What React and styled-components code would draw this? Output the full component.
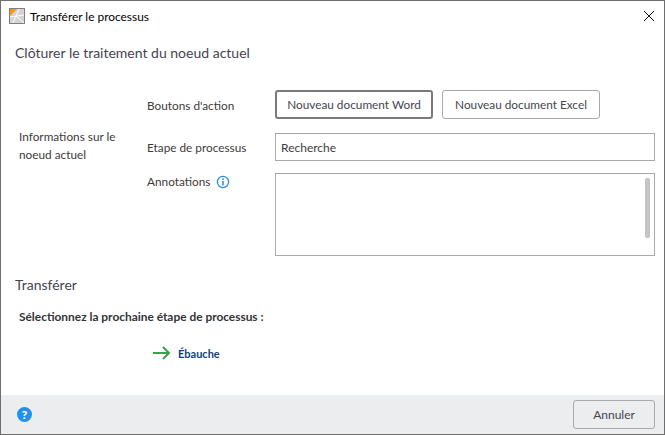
import styled, { createGlobalStyle } from "styled-components";

const GlobalStyle = createGlobalStyle`
  html, body { margin: 0; padding: 0; background: #fff; }
  body { font-family: "Lato", "Noto Sans", sans-serif; }
`;

export default function App() {
  return (
    <>
      <GlobalStyle />
      <Window>
        <TitleBar>
          <AppIcon viewBox="0 0 16 16">
            <rect x="0.5" y="0.5" width="15" height="15" fill="#d4d4d4" stroke="#7d7d7d" />
            <path d="M1 1h7L1 8z" fill="#f39a12" />
            <path d="M4 15 10 1M1 9l14-2M7 8l8 7" stroke="#fff" strokeWidth="1" fill="none" />
          </AppIcon>
          <WindowTitle>Transférer le processus</WindowTitle>
          <CloseIcon viewBox="0 0 10 10">
            <path d="M0 0 10 10M10 0 0 10" stroke="#111" strokeWidth="1" />
          </CloseIcon>
        </TitleBar>
        <Content>
          <SectionTitle>Clôturer le traitement du noeud actuel</SectionTitle>
          <NodeGrid>
            <GroupLabel>Informations sur le noeud actuel</GroupLabel>
            <Fields>
              <FieldRow $height={33}>
                <FieldLabel>Boutons d'action</FieldLabel>
                <Actions>
                  <ActionButton $focused>Nouveau document Word</ActionButton>
                  <ActionButton>Nouveau document Excel</ActionButton>
                </Actions>
              </FieldRow>
              <FieldRow $height={28}>
                <FieldLabel>Etape de processus</FieldLabel>
                <TextBox>Recherche</TextBox>
              </FieldRow>
              <FieldRow $height={83} $top>
                <FieldLabel $top>
                  Annotations
                  <InfoIcon viewBox="0 0 14 14">
                    <circle cx="7" cy="7" r="5.6" fill="none" stroke="#2b8fe0" strokeWidth="1.3" />
                    <rect x="6.2" y="6" width="1.6" height="4.4" fill="#2b8fe0" />
                    <rect x="6.2" y="3.4" width="1.6" height="1.6" fill="#2b8fe0" />
                  </InfoIcon>
                </FieldLabel>
                <TextArea>
                  <ScrollThumb />
                </TextArea>
              </FieldRow>
            </Fields>
          </NodeGrid>
          <TransferTitle>Transférer</TransferTitle>
          <Prompt>Sélectionnez la prochaine étape de processus :</Prompt>
          <NextStep>
            <svg width="18" height="14" viewBox="0 0 18 14">
              <path d="M0 7h16M10 1l6 6-6 6" stroke="#3f9f4c" strokeWidth="2" fill="none" />
            </svg>
            <StepName>Ébauche</StepName>
          </NextStep>
        </Content>
        <Footer>
          <HelpBadge>?</HelpBadge>
          <CancelButton>Annuler</CancelButton>
        </Footer>
      </Window>
    </>
  );
}

const Window = styled.div`
  box-sizing: border-box;
  width: 665px;
  height: 435px;
  border: 1px solid #6e6e6e;
  display: flex;
  flex-direction: column;
  background: #fff;
`;

const TitleBar = styled.div`
  height: 30px;
  display: flex;
  align-items: center;
  padding: 0 10px 0 8px;
  flex-shrink: 0;
`;

const AppIcon = styled.svg`
  width: 16px;
  height: 16px;
  margin-right: 5px;
`;

const WindowTitle = styled.span`
  flex: 1;
  font-size: 11.9px;
  color: #000;
`;

const CloseIcon = styled.svg`
  width: 10px;
  height: 10px;
`;

const Content = styled.div`
  flex: 1;
  padding: 13px 9px 0 14px;
  color: #3f3a3a;
`;

const SectionTitle = styled.div`
  font-size: 14px;
  line-height: 18px;
  color: #44444f;
`;

const NodeGrid = styled.div`
  display: flex;
  align-items: flex-start;
  margin-top: 26px;
`;

const GroupLabel = styled.div`
  box-sizing: border-box;
  width: 132px;
  padding: 40px 20px 0 4px;
  font-size: 11.8px;
  line-height: 18px;
  flex-shrink: 0;
`;

const Fields = styled.div`
  flex: 1;
  display: flex;
  flex-direction: column;
  gap: 12px;
`;

const FieldRow = styled.div`
  display: flex;
  align-items: ${(p) => (p.$top ? "flex-start" : "center")};
  height: ${(p) => p.$height}px;
`;

const FieldLabel = styled.div`
  box-sizing: border-box;
  width: 128px;
  flex-shrink: 0;
  display: flex;
  align-items: center;
  padding-top: ${(p) => (p.$top ? "0" : "2px")};
  font-size: 11.8px;
  line-height: 18px;
`;

const InfoIcon = styled.svg`
  width: 14px;
  height: 14px;
  margin-left: 6px;
`;

const Actions = styled.div`
  display: flex;
  gap: 9px;
`;

const ActionButton = styled.div`
  box-sizing: border-box;
  width: 158px;
  height: 29px;
  display: flex;
  align-items: center;
  justify-content: center;
  font-size: 11.8px;
  color: #44444f;
  background: #fff;
  border-radius: 3px;
  border: ${(p) => (p.$focused ? "2px solid #7a7a7a" : "1px solid #a9a9a9")};
`;

const TextBox = styled.div`
  box-sizing: border-box;
  flex: 1;
  height: 28px;
  padding: 0 5px;
  display: flex;
  align-items: center;
  font-size: 12px;
  border: 1px solid #a9a9a9;
`;

const TextArea = styled.div`
  box-sizing: border-box;
  flex: 1;
  height: 83px;
  padding: 4px 4px;
  display: flex;
  justify-content: flex-end;
  border: 1px solid #a9a9a9;
`;

const ScrollThumb = styled.div`
  width: 5px;
  height: 60px;
  background: #c4c4c4;
  border-radius: 2px;
`;

const TransferTitle = styled.div`
  margin-top: 20px;
  font-size: 14px;
  line-height: 18px;
  color: #44444f;
`;

const Prompt = styled.div`
  margin: 15px 0 0 4px;
  font-size: 11.9px;
  font-weight: 700;
  line-height: 16px;
  color: #33333a;
`;

const NextStep = styled.div`
  display: flex;
  align-items: center;
  gap: 7px;
  margin: 21px 0 0 138px;
`;

const StepName = styled.span`
  font-size: 11px;
  font-weight: 700;
  color: #0f4080;
`;

const Footer = styled.div`
  height: 39px;
  flex-shrink: 0;
  background: #ecedef;
  display: flex;
  align-items: center;
  justify-content: space-between;
  padding: 0 9px 0 16px;
`;

const HelpBadge = styled.div`
  width: 15px;
  height: 15px;
  border-radius: 50%;
  background: #2490ea;
  color: #fff;
  font-size: 12px;
  font-weight: 900;
  line-height: 15px;
  text-align: center;
`;

const CancelButton = styled.div`
  box-sizing: border-box;
  width: 82px;
  height: 29px;
  display: flex;
  align-items: center;
  justify-content: center;
  font-size: 12px;
  color: #44444f;
  border: 1px solid #a9a9a9;
  border-radius: 3px;
`;
